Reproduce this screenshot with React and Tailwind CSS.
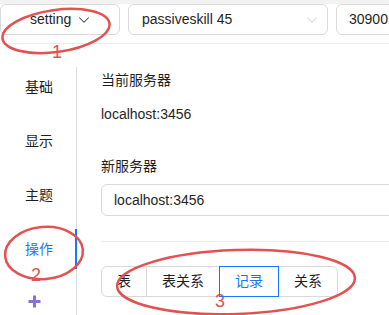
import { ChevronDown } from 'lucide-react'

const font = { fontFamily: '"Liberation Sans", "Noto Sans CJK SC", sans-serif' }

const menu = ['基础', '显示', '主题', '操作']
const segments = ['表', '表关系', '记录', '关系']

function Select({ className, children, chevron = 'text-gray-700' }) {
  return (
    <div className={`h-[31px] shrink-0 rounded-md border border-[#d9d9d9] bg-white flex items-center text-[14px] text-[#1f1f1f] ${className}`}>
      <span className="whitespace-nowrap">{children}</span>
      {chevron && <ChevronDown className={`${chevron} ml-auto shrink-0`} size={18} strokeWidth={1.4} />}
    </div>
  )
}

export default function App() {
  return (
    <div className="relative w-[389px] h-[315px] overflow-hidden bg-white" style={font}>
      <div className="h-1 bg-[#f2f2f2]" />
      <div className="flex gap-[8px] pb-[8px] border-b border-[#ececec]">
        <Select className="w-[120px] pl-[29px] pr-[26px]">setting</Select>
        <Select className="w-[200px] pl-[13px] pr-[6px]" chevron="text-gray-300">passiveskill 45</Select>
        <Select className="w-[120px] pl-[12px]" chevron={null}>309001</Select>
      </div>

      <div className="flex mt-[23px]">
        <div className="w-[77px] shrink-0 border-r border-[#dcdcdc] h-[260px] flex flex-col">
          <div className="flex flex-col gap-[14px]">
            {menu.map((m, i) => (
              <div key={m} className={`h-10 flex items-center pl-[25px] text-[14px] ${i === 3 ? 'text-[#1677ff] border-r-2 border-[#1677ff] -mr-px' : 'text-[#1f1f1f]'}`}>
                {m}
              </div>
            ))}
          </div>
          <svg className="ml-[28px] mt-[26px]" width="13" height="13" viewBox="0 0 13 13">
            <path d="M6.5 0.5v12M0.5 6.5h12" stroke="#8a6fd8" strokeWidth="3" />
          </svg>
        </div>

        <div className="pl-[24px] pt-[2px] flex-1 min-w-0 text-[14px] text-[#1f1f1f]">
          <div className="leading-[22px]">当前服务器</div>
          <div className="leading-[22px] mt-[12px]">localhost:3456</div>
          <div className="leading-[22px] mt-[30px]">新服务器</div>
          <div className="mt-[7px] h-[32px] w-[320px] rounded-md border border-[#d9d9d9] flex items-center pl-[12px]">localhost:3456</div>
          <div className="mt-[25px] border-t border-[#ececec] w-[320px]" />
          <div className="mt-[24px] flex h-[31px]">
            {segments.map((s, i) => (
              <div
                key={s}
                className={`px-[15px] flex items-center border ${i > 0 ? '-ml-px' : ''} ${i === 0 ? 'rounded-l-md' : ''} ${i === 3 ? 'rounded-r-md' : ''} ${i === 2 ? 'border-[#1677ff] text-[#1677ff] z-10' : 'border-[#d9d9d9]'}`}
              >
                {s}
              </div>
            ))}
          </div>
        </div>
      </div>

      <svg className="absolute inset-0 pointer-events-none" width="389" height="315">
        <g fill="none" stroke="#e35151" strokeWidth="2.5">
          <ellipse cx="56" cy="31" rx="54" ry="21" transform="rotate(-8 56 31)" />
          <ellipse cx="44" cy="253" rx="39" ry="26" transform="rotate(-5 44 253)" />
          <ellipse cx="236" cy="282" rx="119" ry="32" transform="rotate(-2 236 282)" />
        </g>
      </svg>
      <span className="absolute left-[52px] top-[43px] text-[18px] leading-none text-[#e35151]">1</span>
      <span className="absolute left-[31px] top-[266px] text-[18px] leading-none text-[#e35151]">2</span>
      <span className="absolute left-[215px] top-[292px] text-[18px] leading-none text-[#e35151]">3</span>
    </div>
  )
}
